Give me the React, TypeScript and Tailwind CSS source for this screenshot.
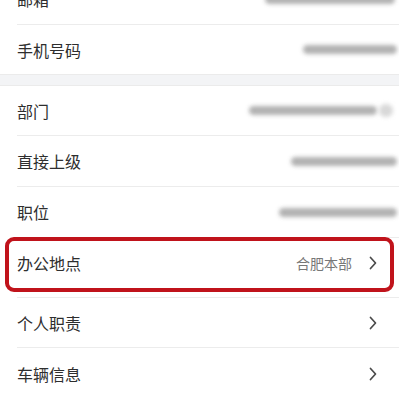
import React from "react";

function Chevron() {
  return (
    <svg width="8" height="14" viewBox="0 0 8 14" className="shrink-0">
      <path d="M1.5 1.5 L6.5 7 L1.5 12.5" fill="none" stroke="#4a4a4a" strokeWidth="1.7" strokeLinecap="round" strokeLinejoin="round" />
    </svg>
  );
}

function Blur({ w, mr, circle }: { w: string; mr: string; circle?: boolean }) {
  return (
    <div className={`ml-auto flex items-center ${mr}`}>
      <div className={`${w} h-[9px] rounded-full bg-[#a4a4a4] blur-[2px] opacity-85`} />
      {circle && <div className="ml-[2px] h-[13px] w-[14px] rounded-full bg-[#d8d8d8] blur-[2px]" />}
    </div>
  );
}

function Divider() {
  return <div className="ml-[17px] h-px bg-[#ececec]" />;
}

export default function App() {
  return (
    <div
      className="relative h-[399px] w-full overflow-hidden bg-white text-[#2e2e2e]"
      style={{ fontFamily: '"Noto Sans CJK SC", "Noto Sans", sans-serif' }}
    >
      <div className="mt-[-26px]">
        <div className="flex h-[50px] items-center pl-[17px] text-[16px]">
          <span>邮箱</span>
          <Blur w="w-[130px]" mr="mr-[4px]" />
        </div>
        <Divider />
        <div className="flex h-[49px] items-center pl-[17px] text-[16px]">
          <span>手机号码</span>
          <Blur w="w-[94px]" mr="mr-[2px]" />
        </div>
        <div className="h-[12px] border-y border-[#ebebeb] bg-[#f3f4f6]" />
        <div className="flex h-[49px] items-center pl-[17px] text-[16px]">
          <span>部门</span>
          <Blur w="w-[128px]" mr="mr-[6px]" circle />
        </div>
        <Divider />
        <div className="flex h-[50px] items-center pl-[17px] text-[16px]">
          <span>直接上级</span>
          <Blur w="w-[106px]" mr="mr-[2px]" />
        </div>
        <Divider />
        <div className="flex h-[50px] items-center pl-[17px] text-[16px]">
          <span>职位</span>
          <Blur w="w-[118px]" mr="mr-[2px]" />
        </div>
        <Divider />
        <div className="flex h-[59px] items-center pb-[9px] pl-[17px] pr-[22px] text-[16px]">
          <span>办公地点</span>
          <span className="ml-auto mr-[17px] text-[14px] text-[#777777]">合肥本部</span>
          <Chevron />
        </div>
        <Divider />
        <div className="flex h-[49px] items-center pl-[17px] pr-[22px] text-[16px]">
          <span>个人职责</span>
          <span className="ml-auto" />
          <Chevron />
        </div>
        <Divider />
        <div className="flex h-[52px] items-center pl-[17px] pr-[22px] text-[16px]">
          <span>车辆信息</span>
          <span className="ml-auto" />
          <Chevron />
        </div>
      </div>
      <div className="pointer-events-none absolute left-[5px] top-[237px] h-[55px] w-[389px] rounded-[9px] border-[4px] border-[#c0131b]" />
    </div>
  );
}
